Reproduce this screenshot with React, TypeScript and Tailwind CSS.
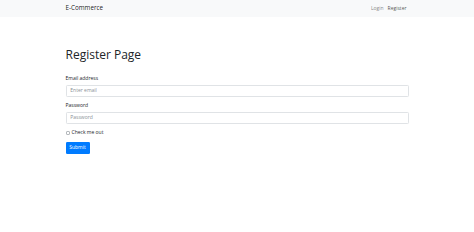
export default function App() {
  return (
    <div className="min-h-[232px] bg-white text-[#212529]" style={{ fontFamily: '"Open Sans", "Noto Sans", Arial, sans-serif' }}>
      <nav className="h-[17px] bg-[#f8f9fa]">
        <div className="w-[343px] mx-auto h-full flex items-center justify-between">
          <span className="text-[6.3px] text-[rgba(0,0,0,0.9)] leading-none">E-Commerce</span>
          <div className="flex gap-[4px] text-[5px] leading-none pr-[2px]">
            <span className="text-[rgba(0,0,0,0.5)]">Login</span>
            <span className="text-[rgba(0,0,0,0.7)]">Register</span>
          </div>
        </div>
      </nav>
      <div className="w-[343px] mx-auto">
        <h1 className="mt-[30px] text-[12px] leading-[15px] font-medium">Register Page</h1>
        <div className="mt-[13px] flex flex-col">
          <div className="text-[5px] leading-[7.5px] mb-[2.5px]">Email address</div>
          <div className="h-[12px] border border-[#e0e3e6] rounded-[1.3px] px-[3.8px] flex items-center text-[5px] text-[#8a9096]">Enter email</div>
          <div className="mt-[5px] text-[5px] leading-[7.5px] mb-[2.5px]">Password</div>
          <div className="h-[12px] border border-[#e0e3e6] rounded-[1.3px] px-[3.8px] flex items-center text-[5px] text-[#8a9096]">Password</div>
          <div className="mt-[5px] flex items-center gap-[2px] h-[7.5px] text-[5px]">
            <div className="w-[4px] h-[4px] border border-[#b5b9bd] rounded-[1px] bg-white" />
            <span>Check me out</span>
          </div>
          <div className="mt-[5px] flex">
            <div className="flex items-center justify-center h-[12px] w-[24px] rounded-[1.3px] bg-[#007bff] text-white text-[5px]">Submit</div>
          </div>
        </div>
      </div>
    </div>
  );
}
